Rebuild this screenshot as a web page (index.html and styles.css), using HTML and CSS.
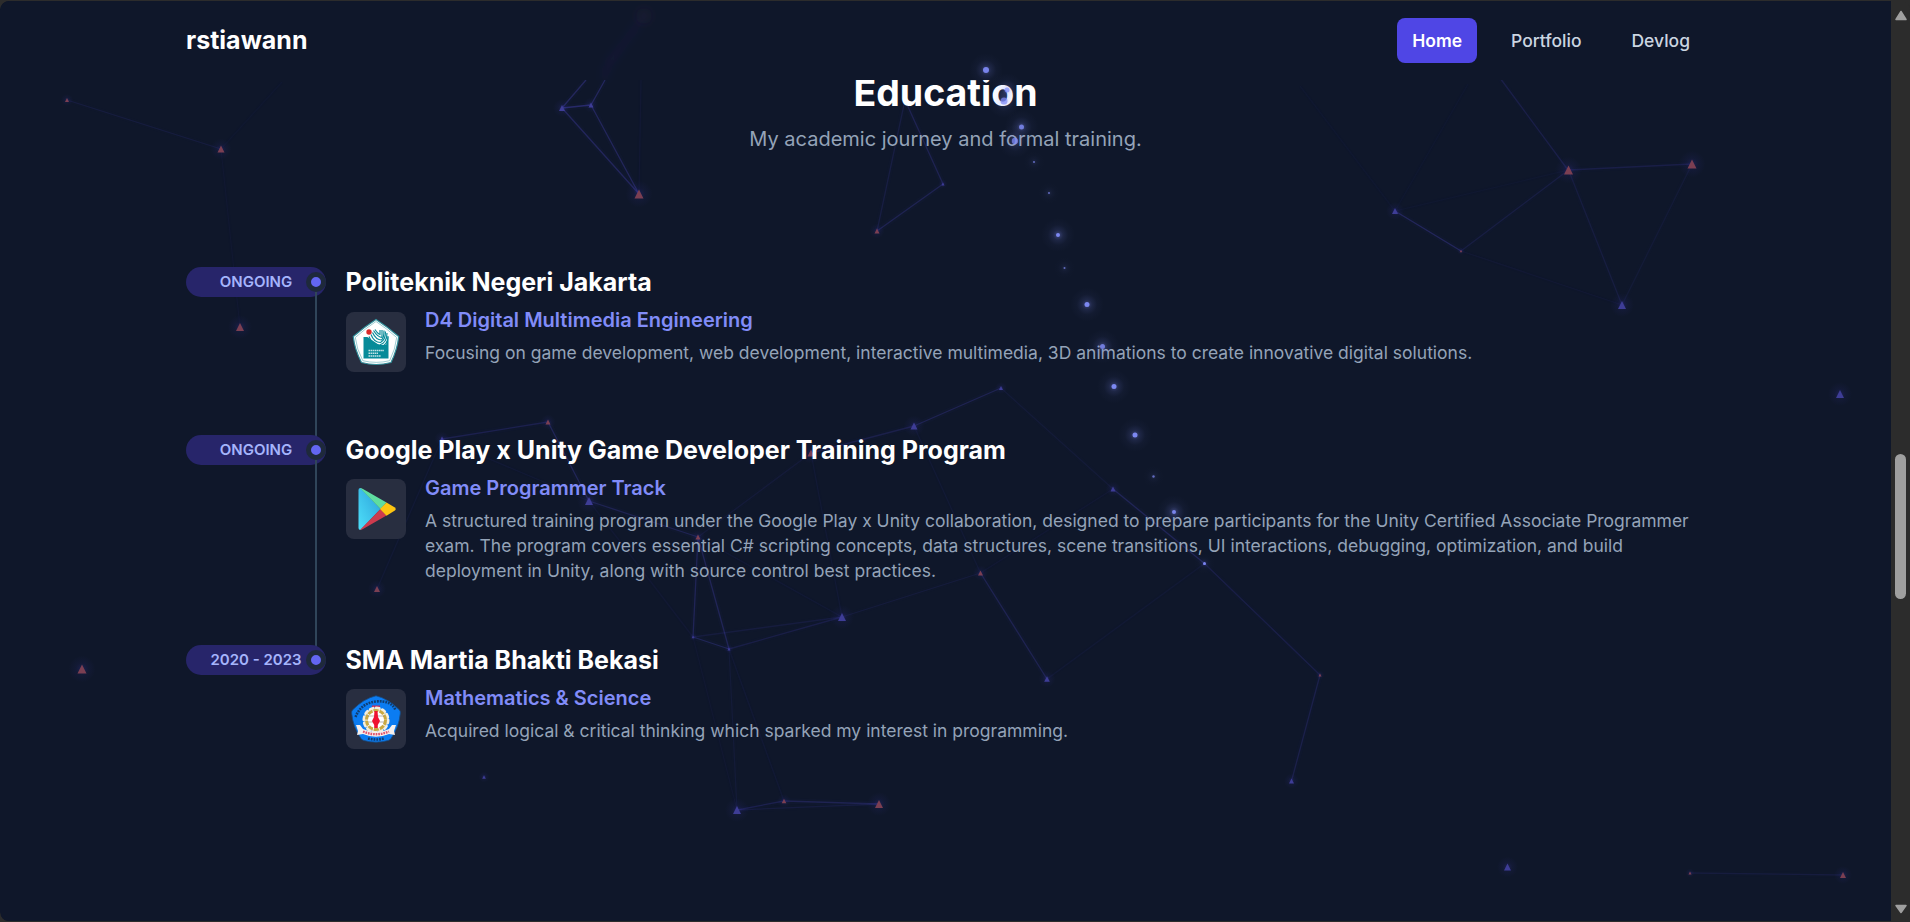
FILE: index.html
```html
<!DOCTYPE html>
<html lang="en">
<head>
<meta charset="utf-8">
<title>rstiawann</title>
<link rel="stylesheet" href="styles.css">
</head>
<body>
<div class="window">
  <div class="page">
    <svg class="network" viewBox="0 0 1891 922" aria-hidden="true">
      <defs>
        <filter id="soft" x="-50%" y="-50%" width="200%" height="200%"><feGaussianBlur stdDeviation="4"/></filter>
        <radialGradient id="glow"><stop offset="0" stop-color="#4f46e5" stop-opacity=".5"/><stop offset=".45" stop-color="#4f46e5" stop-opacity=".15"/><stop offset="1" stop-color="#4f46e5" stop-opacity="0"/></radialGradient>
        <radialGradient id="halo"><stop offset="0" stop-color="#818cf8" stop-opacity=".6"/><stop offset=".3" stop-color="#818cf8" stop-opacity=".2"/><stop offset=".6" stop-color="#818cf8" stop-opacity=".05"/><stop offset="1" stop-color="#818cf8" stop-opacity="0"/></radialGradient>
      </defs>
      <g id="edges" class="edges"></g>
      <g id="nodes"></g>
      <path class="cover" d="M0 0H1891V80H0Z"/>
      <path class="ghost" d="M604 80 610 60 635 30M604 72 642 18" filter="url(#soft)"/>
      <circle class="ghost-dot" cx="644" cy="16" r="8" filter="url(#soft)"/>
    </svg>

    <header class="header">
      <a class="logo">rstiawann</a>
      <nav class="nav">
        <a class="nav-link active">Home</a>
        <a class="nav-link">Portfolio</a>
        <a class="nav-link">Devlog</a>
      </nav>
    </header>

    <main class="section">
      <div class="heading">
        <h2 class="title">Education</h2>
        <p class="subtitle">My academic journey and formal training.</p>
      </div>

      <div class="timeline">
        <article class="entry">
          <div class="when"><span class="pill">ONGOING</span><i class="dot"></i></div>
          <div class="body">
            <h3 class="school">Politeknik Negeri Jakarta</h3>
            <div class="details">
              <div class="badge first">
                <svg viewBox="0 0 60 60" width="60" height="60">
                  <path d="M30 7.500Q41 14.500 52.700 24.500Q51.500 37 45 50.500Q30 54.500 15.500 50.500Q8.500 37 7.300 24.500Q19 14.500 30 7.500Z" fill="#fff" stroke="#318f9b" stroke-width="1.200"/>
                  <path d="M30 9.500Q40 16 50.700 25.500Q49.500 37 43.700 48.700Q30 52 16.800 48.700Q10.500 37 9.300 25.500Q20 16 30 9.500Z" fill="none" stroke="#5cadb5" stroke-width=".6"/>
                  <path d="M17.500 25H42.500V46.500H17.500Z" fill="#078b99"/>
                  <path d="M20 24 28 16 42 19V25L40 33H33Z" fill="#fff"/>
                  <g fill="none" stroke="#078b99" stroke-width="1.150"><path d="M21.500 27Q25 35.500 33 35.500 42 34 42 24"/><path d="M23 24.500Q26 33 33.500 33 41 31 41 21"/><path d="M25 22.500Q28 30.500 34.500 30.500 39.500 28 39.500 19.500"/><path d="M26.500 20.500Q30 28 35.500 28 38 26 38 18.500"/><path d="M27.500 18.500Q32 25.500 36 25.500V18"/><path d="M29 17.500Q32 22 34 22.500V18"/></g>
                  <circle cx="23" cy="20" r="2.700" fill="#d92b2b"/>
                  <path d="M22.500 38.500H38M22.500 41.300H32M22.500 44H35" stroke="#c3e4e7" stroke-width="1.400" stroke-dasharray="1.600 .5"/>
                </svg>
              </div>
              <div class="copy">
                <h4 class="program">D4 Digital Multimedia Engineering</h4>
                <p class="text">Focusing on game development, web development, interactive multimedia, 3D animations to create innovative digital solutions.</p>
              </div>
            </div>
          </div>
        </article>

        <article class="entry">
          <div class="when"><span class="pill">ONGOING</span><i class="dot"></i></div>
          <div class="body">
            <h3 class="school">Google Play x Unity Game Developer Training Program</h3>
            <div class="details">
              <div class="badge">
                <svg viewBox="0 0 60 60" width="60" height="60">
                  <defs><linearGradient id="play" x1="1" y1="0" x2="0" y2="1"><stop offset="0" stop-color="#2b9fd8"/><stop offset="1" stop-color="#4ee0fa"/></linearGradient></defs>
                  <path d="M12.500 11Q12.500 9 14.500 9L34.500 30 14.500 51Q12.500 51 12.500 49Z" fill="url(#play)"/>
                  <path d="M14 9Q15 8.800 17 10L40.500 23.500 34.500 30Z" fill="#5fdda0"/>
                  <path d="M14 51Q15 51.200 17 50L40.500 36.500 34.500 30Z" fill="#cd3b4e"/>
                  <path d="M40.500 23.500 48.500 28.200Q51 30 48.500 31.800L40.500 36.700 34 30Z" fill="#fdc511"/>
                </svg>
              </div>
              <div class="copy">
                <h4 class="program">Game Programmer Track</h4>
                <p class="text">A structured training program under the Google Play x Unity collaboration, designed to prepare participants for the Unity Certified Associate Programmer exam. The program covers essential C# scripting concepts, data structures, scene transitions, UI interactions, debugging, optimization, and build deployment in Unity, along with source control best practices.</p>
              </div>
            </div>
          </div>
        </article>

        <article class="entry">
          <div class="when"><span class="pill">2020 - 2023</span><i class="dot"></i></div>
          <div class="body">
            <h3 class="school">SMA Martia Bhakti Bekasi</h3>
            <div class="details">
              <div class="badge">
                <svg viewBox="0 0 60 60" width="60" height="60">
                  <path d="M30 6.800Q42 9.500 53.500 21Q54.700 22.500 54.300 24.500Q53 38 45 49.500Q44 51 42 51.500Q30 54.800 18 51.500Q16 51 15 49.500Q7 38 5.700 24.500Q5.300 22.500 6.500 21Q18 9.500 30 6.800Z" fill="#0b7cf2" stroke="#174c87" stroke-width=".8"/>
                  <path d="M9.500 28Q15 14 30 12.500T49.500 21" fill="none" stroke="#103d70" stroke-width="2.600" stroke-dasharray="1.800 1"/>
                  <path d="M22 49.500Q30 51.500 38 49.500" fill="none" stroke="#103d70" stroke-width="2.600" stroke-dasharray="1.800 1"/>
                  <path d="M26 17.500H34" stroke="#c22b56" stroke-width="2"/>
                  <circle cx="30" cy="31" r="12" fill="none" stroke="#f4efdf" stroke-width="3" stroke-linecap="round" stroke-dasharray="3 3.280"/>
                  <circle cx="30" cy="31" r="11.500" fill="#ede9da"/>
                  <circle cx="30" cy="31" r="9.500" fill="#fff" stroke="#c9a941" stroke-width="3" stroke-dasharray="5 1"/>
                  <path d="M22 27H38M22 33H38" stroke="#8d8472" stroke-width=".6"/>
                  <path d="M28.500 22H31.500L32 28 34 32 31.800 36V39H28.200V36L26 32 28 28Z" fill="#ef1230"/>
                  <path d="M10 36 14 36 17 40Q30 46 43 40L46 36 50 36 48 42 49 46 43 45Q30 50.500 17 45L11 46 12 42Z" fill="#f5f0ee"/>
                  <path d="M17 42.500Q30 48 43 42.500" fill="none" stroke="#e2526a" stroke-width="2.300" stroke-dasharray="1.700 .9"/>
                </svg>
              </div>
              <div class="copy">
                <h4 class="program">Mathematics &amp; Science</h4>
                <p class="text">Acquired logical &amp; critical thinking which sparked my interest in programming.</p>
              </div>
            </div>
          </div>
        </article>
      </div>
    </main>

    <svg class="trail" id="trail" viewBox="0 0 1891 922" aria-hidden="true"></svg>
  </div>

  <aside class="scrollbar">
    <svg class="arrow" viewBox="0 0 12 11"><path d="M6 1.500 11 9.500H1Z"/></svg>
    <i class="thumb"></i>
    <svg class="arrow" viewBox="0 0 12 11"><path d="M6 9.500 11 2.500H1Z"/></svg>
  </aside>
</div>
<script src="network.js"></script>
</body>
</html>
```

FILE: styles.css
```css
* { box-sizing: border-box; margin: 0; padding: 0; }
body { background: #2c2c2c; font-family: Inter, "Liberation Sans", sans-serif; height: 922px; overflow: hidden; }
.window { display: flex; height: 922px; padding: 1px 0 1px; border-radius: 10px; overflow: hidden; }
.page { position: relative; flex: 1; background: #0f172a; border-radius: 9px 0 0 8px; overflow: hidden; }
.network, .trail { position: absolute; left: 0; top: -1px; width: 1891px; height: 922px; pointer-events: none; }
.edges { fill: none; stroke: #5b50e8; }
.cover { fill: #0f172a; }
.ghost { fill: none; stroke: #4f46e5; stroke-opacity: .07; stroke-width: 4; }
.ghost-dot { fill: #7c3a78; fill-opacity: .08; }
.header { position: relative; display: flex; justify-content: space-between; align-items: center; height: 79px; padding: 0 186px; }
.logo { padding-bottom: 1px; color: #fff; font-size: 25px; font-weight: 700; }
.nav { display: flex; gap: 20px; }
.nav-link { height: 45px; padding: 0 15px; line-height: 45px; border-radius: 8px; color: #cbd5e1; font-size: 17.500px; font-weight: 500; }
.nav-link.active { margin-right: -1px; background: #4f46e5; color: #fff; font-weight: 600; }
.section { position: relative; padding: 0 186px; height: 841px; overflow: hidden; }
.heading { display: flex; flex-direction: column; align-items: center; margin-top: -12px; }
.title { color: #fff; font-size: 37.500px; line-height: 50px; font-weight: 700; }
.subtitle { margin-top: 6px; color: #94a3b8; font-size: 20px; line-height: 30px; }
.timeline { margin-top: 113px; }
.entry { display: grid; grid-template-columns: 140px 1fr; column-gap: 19.500px; }
.when { position: relative; }
.pill { display: block; height: 30px; border-radius: 15px; background: #27256a; color: #a5b4fc; font-size: 15px; font-weight: 600; line-height: 30px; text-align: center; }
.when::after { content: ""; position: absolute; left: 129px; top: 15px; bottom: -15px; width: 2px; background: #30455a; }
.entry:last-child .when::after { display: none; }
.dot { position: absolute; z-index: 2; left: 120px; top: 5px; width: 20px; height: 20px; border: 5px solid #1e293b; border-radius: 50%; background: #6366f1; }
.body { height: 168px; }
.entry:nth-child(2) .body { height: 210px; }
.school { color: #fff; font-size: 25px; line-height: 30px; font-weight: 700; }
.details { display: grid; grid-template-columns: 60px 1fr; column-gap: 19.500px; align-items: start; padding-top: 8px; }
.badge { width: 60px; height: 60px; margin-top: 6.400px; border-radius: 8px; background: #282e40; }
.badge.first { margin-top: 7.400px; }
.program { color: #818cf8; font-size: 20px; line-height: 30px; font-weight: 600; }
.text { padding-top: 5px; color: #94a3b8; font-size: 17.500px; line-height: 25px; }
.scrollbar { display: flex; flex-direction: column; align-items: center; width: 19px; padding: 9px 0 7px; background: #2c2c2c; }
.arrow { width: 12px; height: 11px; fill: #9f9f9f; stroke: #9f9f9f; stroke-width: 1.500; stroke-linejoin: round; }
.thumb { width: 11px; height: 145px; margin-top: 433px; margin-bottom: auto; border-radius: 6px; background: #9f9f9f; }
```

FILE: network.js
```js
const indigo = '#3e3d96', rose = '#7b3f52';
// x, y, half-width, colour
const points = {
  a:[67,100,2,rose], b:[221,149,3.5,rose], c:[240,327,4,rose], d:[562,108,3,indigo], e:[591,105,2.5,indigo],
  f:[639,194,4.5,rose], g:[905,100,0,indigo], h:[943,184,1.5,indigo], i:[877,231,2.5,rose],
  j:[1395,211,3,indigo], k:[1461,251,1.3,rose], l:[1568.500,170,4.5,rose], m:[1692,164,4.5,rose], n:[1622,305,4,indigo],
  o:[442,439,2.5,indigo], p:[548,422,2.5,rose], q:[589,501,4,indigo], r:[698,537,2.5,rose],
  s:[811,453,3.5,rose], t:[914,426,3.5,indigo], u:[1001,388,2,indigo], v:[1113,489,2.5,indigo],
  w:[980.500,573,2.5,rose], x:[842,617,4,indigo], y:[693,637,1.3,indigo], z:[729,649,1.5,indigo],
  A:[1047,679,2.8,indigo], B:[1204.500,563.500,1.5,indigo], C:[1320,675,1.5,rose], D:[1291.500,781,2.5,indigo],
  E:[737,810,4,indigo], F:[784,801,2.3,rose], G:[879,804,4,rose], H:[484,777,1.8,indigo],
  I:[82,669,4.5,rose], J:[377,589,3,rose], K:[1840,394,4,indigo], L:[1507.500,867,3.5,indigo],
  M:[1690,873,1.5,rose], N:[1843,875,3,rose]
};
const links = [['a','b',.1],['b','c',.04],['d','e',.32],['d','f',.25],['e','f',.25],['g','h',.2],['g','i',.12],['h','i',.2],
  ['j','k',.25],['k','l',.12],['j','l',.035],['l','m',.14],['l','n',.11],['m','n',.07],['k','n',.05],
  ['o','p',.18],['p','q',.22],['o','q',.06],['q','r',.2],['r','s',.08],['s','t',.16],['t','u',.2],['u','v',.07],['v','B',.22],
  ['v','w',.05],['t','w',.06],['w','x',.09],['w','A',.2],['A','B',.06],['B','C',.14],['C','D',.16],['s','x',.06],['r','x',.06],
  ['r','y',.22],['r','z',.22],['y','z',.22],['y','x',.1],['z','x',.14],['q','y',.05],['z','E',.07],['z','F',.06],['y','E',.04],
  ['E','F',.18],['F','G',.2],['E','G',.1],['o','J',.06],['M','N',.1]];
const edges = document.getElementById('edges');
const line = (x1, y1, x2, y2, o) =>
  `<path d="M${x1} ${y1} ${x2} ${y2}" stroke-width="1.3" stroke-opacity="${o}"/><path d="M${x1} ${y1} ${x2} ${y2}" stroke-width="6" stroke-opacity="${o * .09}"/>`;
edges.innerHTML = links.map(([a, b, o]) => line(points[a][0], points[a][1], points[b][0], points[b][1], o)).join('')
  + line(562, 108, 586, 80, .26) + line(591, 105, 605, 80, .26) + line(639, 194, 641, 80, .05)
  + line(1500, 78, 1568, 170, .15) + line(1468, 84, 1395, 211, .035) + line(1300, 86, 1395, 211, .035) + line(221, 149, 282, 82, .035);
document.getElementById('nodes').innerHTML = Object.values(points).filter(p => p[2]).map(([x, y, s, c]) =>
  `<circle cx="${x}" cy="${y}" r="${s * 3}" fill="url(#glow)" opacity=".4"/><path d="M${x} ${y - s} L${x + s} ${y + s} H${x - s}Z" fill="${c}"/>`).join('');
const trail = [[986,70,3,.9],[1007,90,2.5,.7],[1004,101,3.5,.7],[1021.5,127,2.5,.8],[1015,141,3.2,.7],[1034,162,1,.7],[1049,193,1,.7],
  [1058,235,2,.95],[1064.5,268,1,.7],[1087,304.5,2.5,.95],[1102.5,346.5,2.5,.8],[1114,386.5,2.5,.95],[1135,435,2.5,.95],[1153.5,476.5,1.2,.7],[1174,512,2,.9],[1204.5,563.5,1.5,.9]];
document.getElementById('trail').innerHTML = trail.map(([x, y, r, o]) =>
  `<circle cx="${x}" cy="${y}" r="${r < 1.6 ? 11 : 17}" fill="url(#halo)" opacity="${r < 1.6 ? .2 : .65}"/><circle cx="${x}" cy="${y}" r="${r}" fill="#818cf8" opacity="${o}"/>`).join('');
```
